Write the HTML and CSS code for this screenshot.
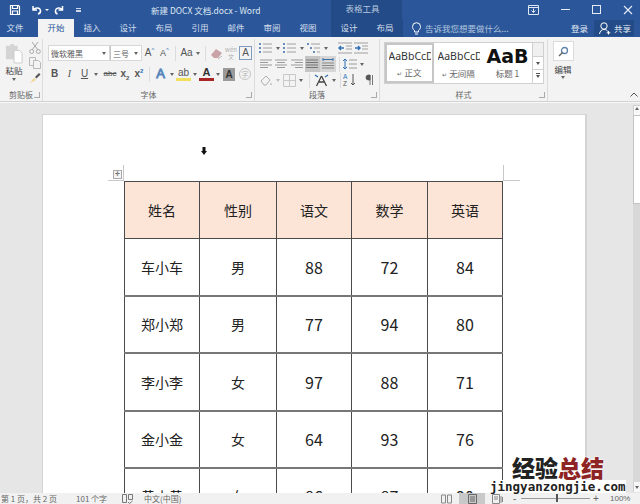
FILE: index.html
```html
<!DOCTYPE html>
<html lang="zh-CN">

<head>
    <meta charset="UTF-8">
    <title>新建 DOCX 文档.docx - Word</title>
    <link rel="stylesheet" href="styles.css">
</head>

<body>
    <div class="app">
        <!-- title bar -->
        <div class="titlebar">
            <div class="qat">
                <svg class="qat-save" width="12" height="12" viewBox="0 0 12 12"><path d="M1.5 1.5h8l1 1v8h-9z M3.5 1.5v3h5v-3 M3.5 10.5v-3.500h5v3.500" fill="none" stroke="#fff" stroke-width="1.200"/></svg>
                <svg class="qat-undo" width="13" height="12" viewBox="0 0 13 12"><path d="M3 2v4h4 M3.500 5.500c2-2.500 6.500-2 7 1 .3 2-1 3-2.500 3.500" fill="none" stroke="#fff" stroke-width="1.500"/></svg>
                <span class="qat-caret"></span>
                <svg class="qat-redo" width="12" height="12" viewBox="0 0 12 12"><path d="M9.500 2v4h-4 M9 5.500c-2-2.500-6-2-6.500 1-.3 2 .5 3 2 3.500" fill="none" stroke="#fff" stroke-width="1.500"/></svg>
                <span class="qat-more"></span>
            </div>
            <div class="doc-title">新建 DOCX 文档.docx - Word</div>
            <div class="context-title">表格工具</div>
            <div class="win-btns">
                <svg class="win-opt" width="11" height="10" viewBox="0 0 11 10"><path d="M.5.500h10v9h-10z M.5 2.500h10 M5.500 3.500v4 M3.500 5.500l2 2 2-2" fill="none" stroke="#dfe7f3"/></svg>
                <span class="win-min"></span>
                <span class="win-max"></span>
                <svg class="win-close" width="10" height="10" viewBox="0 0 10 10"><path d="M1 1l8 8 M9 1l-8 8" stroke="#e6ecf5" stroke-width="1.100"/></svg>
            </div>
        </div>

        <!-- tabs -->
        <div class="tabs">
            <span class="tab tab-file">文件</span>
            <span class="tab active">开始</span>
            <span class="tab">插入</span>
            <span class="tab">设计</span>
            <span class="tab">布局</span>
            <span class="tab">引用</span>
            <span class="tab">邮件</span>
            <span class="tab">审阅</span>
            <span class="tab">视图</span>
            <div class="context-tabs">
                <span class="tab">设计</span>
                <span class="tab">布局</span>
            </div>
            <div class="tell-me">
                <svg width="9" height="13" viewBox="0 0 9 13"><path d="M2.500 8.500C1 7.300.5 6 .5 4.700a4 4 0 0 1 8 0c0 1.300-.5 2.600-2 3.800v1.500h-4z M3 12h3" fill="none" stroke="#fff"/></svg>
                <span>告诉我您想要做什么...</span>
            </div>
            <span class="login">登录</span>
            <div class="share">
                <svg width="12" height="13" viewBox="0 0 12 13"><circle cx="5" cy="4" r="3.200" fill="none" stroke="#fff"/><path d="M.5 12c.5-3 2.200-4.500 4.500-4.500s3 .7 3.700 2 M9.500 9v3.500 M7.700 10.800h3.600" fill="none" stroke="#fff"/></svg>
                <span>共享</span>
            </div>
        </div>

        <!-- ribbon -->
        <div class="ribbon">
            <div class="group group-clip">
                <div class="clip-body">
                    <div class="paste">
                        <svg width="18" height="21" viewBox="0 0 20 23"><path d="M1 3h5V1h4v2h4v15H1z" fill="#d4d4d4"/><path d="M10 8h6l3 3v11h-9z" fill="#fff" stroke="#c8c8c8"/></svg>
                        <span class="paste-label">粘贴</span>
                        <span class="arrow"></span>
                    </div>
                    <div class="clip-tools">
                        <svg width="12" height="13" viewBox="0 0 12 13"><path d="M3 1l6 8 M9 1L3 9" stroke="#a8a8a8"/><circle cx="2.700" cy="10.500" r="2" fill="none" stroke="#a8a8a8"/><circle cx="9.300" cy="10.500" r="2" fill="none" stroke="#a8a8a8"/></svg>
                        <svg width="12" height="12" viewBox="0 0 12 12"><path d="M.5.500h6v8h-6z" fill="#f3f3f3" stroke="#b8b8b8"/><path d="M4.500 3.500h5l2 2v6h-7z" fill="#f3f3f3" stroke="#b8b8b8"/></svg>
                        <svg width="12" height="12" viewBox="0 0 12 12"><path d="M1 11l4-5 2 2z" fill="#f2d38c"/><path d="M6 5l4-4 1.500 1.500-4 4z" fill="#555"/></svg>
                    </div>
                </div>
                <div class="group-foot"><span>剪贴板</span><i class="launcher"></i></div>
            </div>

            <div class="group group-font">
                <div class="tool-row">
                    <div class="select select-font"><span>微软雅黑</span><span class="arrow"></span></div>
                    <div class="select select-size"><span>三号</span><span class="arrow"></span></div>
                    <span class="tb">A<sup>^</sup></span>
                    <span class="tb tb-small">A<sup>^</sup></span>
                    <span class="tb-sep"></span>
                    <span class="tb tb-aa">Aa</span><span class="arrow arrow-inline"></span>
                    <span class="tb-sep"></span>
                    <svg class="tb-svg" width="13" height="13" viewBox="0 0 13 13"><path d="M1 8l5-6 6 4-4 5H4z" fill="#c9a3a8"/><path d="M8 12l4-3" stroke="#bbb"/></svg>
                    <span class="tb tb-wen">wén<br>文</span>
                    <span class="tb tb-box">A</span>
                </div>
                <div class="tool-row tool-row-2">
                    <span class="tb tb-b">B</span>
                    <span class="tb tb-i">I</span>
                    <span class="tb tb-u">U</span><span class="arrow arrow-inline"></span>
                    <span class="tb tb-abc">abc</span>
                    <span class="tb tb-x">x<sub>2</sub></span>
                    <span class="tb tb-x">x<sup>2</sup></span>
                    <span class="tb-sep"></span>
                    <span class="tb tb-fx">A</span><span class="arrow arrow-inline"></span>
                    <span class="tb tb-hl">ab</span><span class="arrow arrow-inline"></span>
                    <span class="tb tb-color">A</span><span class="arrow arrow-inline"></span>
                    <span class="tb tb-shade">A</span>
                    <span class="tb tb-circle">字</span>
                </div>
                <div class="group-foot"><span>字体</span><i class="launcher"></i></div>
            </div>

            <div class="group group-para">
                <div class="para-row para-row-1">
                    <svg class="list-ic" width="14" height="12" viewBox="0 0 14 12"><path d="M0 2h2 M0 6h2 M0 10h2" stroke="#3a6ea5" stroke-width="1.500"/><path d="M4 2h9 M4 6h9 M4 10h9" stroke="#a0a0a0"/></svg><span class="arrow arrow-inline"></span>
                    <svg class="list-ic" width="14" height="12" viewBox="0 0 14 12"><path d="M1 1v2 M0 6h2 M0 10h2" stroke="#3a6ea5" stroke-width="1.500"/><path d="M4 2h9 M4 6h9 M4 10h9" stroke="#a0a0a0"/></svg><span class="arrow arrow-inline"></span>
                    <svg class="list-ic" width="14" height="12" viewBox="0 0 14 12"><path d="M0 2h2 M3 6h2 M6 10h2" stroke="#3a6ea5" stroke-width="1.500"/><path d="M4 2h9 M7 6h6 M10 10h3" stroke="#a0a0a0"/></svg><span class="arrow arrow-inline"></span>
                    <svg class="indent-ic" width="14" height="12" viewBox="0 0 14 12"><path d="M1 6h5 M3 4L1 6l2 2" fill="none" stroke="#2f6fb5" stroke-width="1.400"/><path d="M0 1h14 M8 4h6 M8 7h6 M0 11h14" stroke="#a0a0a0"/></svg>
                    <svg class="indent-ic2" width="14" height="12" viewBox="0 0 14 12"><path d="M1 6h5 M4 4l2 2-2 2" fill="none" stroke="#2f6fb5" stroke-width="1.400"/><path d="M0 1h14 M8 4h6 M8 7h6 M0 11h14" stroke="#a0a0a0"/></svg>
                </div>
                <div class="para-row para-row-2">
                    <span class="align"><svg width="12" height="10" viewBox="0 0 12 10"><path d="M0 1h12 M0 3.500h8 M0 6h12 M0 8.500h8" stroke="#9a9a9a"/></svg></span>
                    <span class="align"><svg width="12" height="10" viewBox="0 0 12 10"><path d="M0 1h12 M2 3.500h8 M0 6h12 M2 8.500h8" stroke="#9a9a9a"/></svg></span>
                    <span class="align"><svg width="12" height="10" viewBox="0 0 12 10"><path d="M0 1h12 M4 3.500h8 M0 6h12 M4 8.500h8" stroke="#9a9a9a"/></svg></span>
                    <span class="align on"><svg width="12" height="10" viewBox="0 0 12 10"><path d="M0 1h12 M0 3.500h12 M0 6h12 M0 8.500h12" stroke="#777"/></svg></span>
                    <span class="align on-light"><svg width="12" height="12" viewBox="0 0 12 12"><path d="M1 0v3 M11 0v3 M1 1.500h10" stroke="#3a6ea5"/><path d="M0 5h12 M0 7.500h12 M0 10h12" stroke="#8a8a8a"/></svg></span>
                    <span class="tb-sep"></span>
                    <svg class="spacing-ic" width="14" height="12" viewBox="0 0 14 12"><path d="M2 1v10 M0 3l2-2 2 2 M0 9l2 2 2-2" fill="none" stroke="#2f6fb5"/><path d="M6 2h8 M6 6h8 M6 10h8" stroke="#9a9a9a"/></svg><span class="arrow arrow-inline"></span>
                </div>
                <div class="para-row para-row-3">
                    <svg width="14" height="13" viewBox="0 0 14 13"><path d="M2 7l5-5 4 4-4 5H5z" fill="#f3f3f3" stroke="#b0b0b0"/><path d="M12 8l1 3h-2z" fill="#c0c0c0"/></svg><span class="arrow arrow-inline arrow-pale"></span>
                    <svg class="border-ic" width="13" height="13" viewBox="0 0 13 13"><path d="M.5.500h12v12H.5z M6.500.500v12 M.5 6.500h12" fill="none" stroke="#c8c8c8"/></svg><span class="arrow arrow-inline"></span>
                    <span class="tb-sep"></span>
                    <svg class="chinese-ic" width="15" height="13" viewBox="0 0 15 13"><path d="M1 1l3 2 M14 1l-3 2" stroke="#2f6fb5" stroke-width="1.300"/><path d="M7.500 2l-5 10 M7.500 2l5 10 M5 8h5" fill="none" stroke="#444" stroke-width="1.300"/></svg><span class="arrow arrow-inline"></span>
                    <span class="tb-sep tb-sep-tight"></span>
                    <svg class="sort-ic" width="13" height="14" viewBox="0 0 13 14"><text x="0" y="6" font-size="6.500" font-family="Liberation Sans" fill="#2f6fb5">A</text><text x="0" y="13" font-size="6.500" font-family="Liberation Sans" fill="#555">Z</text><path d="M10 1v11 M8 10l2 2 2-2" fill="none" stroke="#555"/></svg>
                    <span class="tb-sep tb-sep-clear"></span>
                    <svg class="pilcrow-ic" width="10" height="12" viewBox="0 0 10 12"><path d="M5 1H3.500a2.300 2.300 0 0 0 0 5H5z M5 1v10 M7.500 1v10" fill="#555" stroke="#555" stroke-width=".8"/></svg>
                </div>
                <div class="group-foot"><span>段落</span><i class="launcher"></i></div>
            </div>

            <div class="group group-styles">
                <div class="gallery">
                    <div class="style-item selected">
                        <span class="style-sample">AaBbCcD</span>
                        <span class="style-name"><i>↵</i>正文</span>
                    </div>
                    <div class="style-item">
                        <span class="style-sample">AaBbCcD</span>
                        <span class="style-name"><i>↵</i>无间隔</span>
                    </div>
                    <div class="style-item">
                        <span class="style-sample style-big">AaB</span>
                        <span class="style-name">标题 1</span>
                    </div>
                    <div class="gallery-scroll">
                        <span class="scroll-up"></span>
                        <span class="scroll-down"></span>
                        <span class="scroll-more"></span>
                    </div>
                </div>
                <div class="group-foot"><span>样式</span><i class="launcher"></i></div>
            </div>

            <div class="group group-edit">
                <div class="edit-btn">
                    <svg width="11" height="11" viewBox="0 0 11 11"><circle cx="6.500" cy="4.500" r="3" fill="none" stroke="#5d7fa8" stroke-width="1.300"/><path d="M4.500 6.500L1 10" stroke="#666" stroke-width="1.500"/></svg>
                </div>
                <span class="edit-label">编辑</span>
                <span class="arrow"></span>
            </div>
            <svg class="collapse" width="8" height="5" viewBox="0 0 8 5"><path d="M.5 4.500L4 1l3.500 3.500" fill="none" stroke="#555"/></svg>
        </div>

        <!-- document -->
        <div class="workspace">
            <div class="page">
                <svg class="col-cursor" width="6" height="8" viewBox="0 0 6 8"><path d="M1.500 0h3v4H6L3 8 0 4h1.500z" fill="#111"/></svg>
                <span class="crop crop-lv"></span>
                <span class="crop crop-lh"></span>
                <span class="crop crop-rv"></span>
                <span class="crop crop-rh"></span>
                <span class="move-handle">+</span>
                <table class="score-table">
                    <colgroup>
                        <col class="col-a">
                        <col class="col-b">
                        <col class="col-c">
                        <col class="col-d">
                        <col class="col-e">
                    </colgroup>
                    <tr class="head">
                        <td>姓名</td>
                        <td>性别</td>
                        <td>语文</td>
                        <td>数学</td>
                        <td>英语</td>
                    </tr>
                    <tr class="row">
                        <td>车小车</td>
                        <td>男</td>
                        <td class="num">88</td>
                        <td class="num">72</td>
                        <td class="num">84</td>
                    </tr>
                    <tr class="row">
                        <td>郑小郑</td>
                        <td>男</td>
                        <td class="num">77</td>
                        <td class="num">94</td>
                        <td class="num">80</td>
                    </tr>
                    <tr class="row row-tall">
                        <td>李小李</td>
                        <td>女</td>
                        <td class="num">97</td>
                        <td class="num">88</td>
                        <td class="num">71</td>
                    </tr>
                    <tr class="row">
                        <td>金小金</td>
                        <td>女</td>
                        <td class="num">64</td>
                        <td class="num">93</td>
                        <td class="num">76</td>
                    </tr>
                    <tr class="row">
                        <td>黄小黄</td>
                        <td>女</td>
                        <td class="num">86</td>
                        <td class="num">87</td>
                        <td class="num">90</td>
                    </tr>
                </table>
            </div>
            <div class="scrollbar">
                <span class="scroll-btn btn-up"></span>
                <span class="scroll-thumb"></span>
                <span class="scroll-track"></span>
                <span class="scroll-btn btn-down"></span>
            </div>
        </div>

        <!-- status bar -->
        <div class="statusbar">
            <span class="st-pages">第 1 页，共 2 页</span>
            <span class="st-words">101 个字</span>
            <svg class="st-proof" width="11" height="10" viewBox="0 0 11 10"><path d="M.5.500h4v8h-4z M6.500.500h4v5h-4z M6 8l1.500 1.500L10.500 7" fill="none" stroke="#777"/></svg>
            <span class="st-lang">中文(中国)</span>
            <div class="st-views">
                <span class="view-btn"><svg width="11" height="10" viewBox="0 0 11 10"><path d="M.5 1h4v8h-4z M6.500 1h4v8h-4z" fill="none" stroke="#888"/></svg></span>
                <span class="view-btn on"><svg width="9" height="10" viewBox="0 0 9 10"><path d="M.5.500h8v9h-8z M2 3h5 M2 5h5 M2 7h5" fill="none" stroke="#666"/></svg></span>
                <span class="view-btn"><svg width="11" height="10" viewBox="0 0 11 10"><path d="M.5.500h7v9h-7z M2 3h4 M2 5h4 M9 2v7 M10.500 3v5" fill="none" stroke="#888"/></svg></span>
            </div>
            <div class="zoom-slider">
                <span class="zoom-minus">-</span>
                <span class="zoom-track"><i class="zoom-thumb"></i></span>
                <span class="zoom-plus">+</span>
            </div>
            <span class="st-zoom">100%</span>
        </div>

        <!-- watermark over the corner -->
        <div class="watermark">
            <div class="wm-cn">经验<b>总结</b></div>
            <div class="wm-url">jingyanzongjie.com</div>
        </div>
    </div>
</body>

</html>
```

FILE: styles.css
```css
* {
    box-sizing: border-box;
}

html,
body {
    margin: 0;
    padding: 0;
}

body {
    font-family: "Noto Sans CJK SC", "Noto Sans", sans-serif;
    font-size: 8px;
    color: #444;
    overflow: hidden;
}

.app {
    position: relative;
    width: 640px;
    height: 504px;
    display: flex;
    flex-direction: column;
    overflow: hidden;
}

/* title bar */
.titlebar {
    flex: 0 0 19px;
    display: flex;
    align-items: center;
    background-color: #2b579a;
    color: #dfe7f3;
}

.qat {
    flex: 0 0 151px;
    display: flex;
    align-items: center;
    padding-left: 9px;
}

.qat-undo {
    margin-left: 9px;
}

.qat-caret {
    margin-left: 2px;
    border: 2px solid transparent;
    border-top-color: #fff;
    margin-top: 2px;
}

.qat-redo {
    margin-left: 4px;
}

.qat-more {
    margin-left: 11px;
    width: 5px;
    height: 4px;
    border-top: 1px solid #cdd9ea;
    border-bottom: 2px solid #cdd9ea;
}

.doc-title {
    flex: 0 0 180px;
    font-size: 8.500px;
    white-space: nowrap;
}

.context-title {
    flex: 0 0 71px;
    height: 19px;
    line-height: 17px;
    text-align: center;
    padding-right: 8px;
    font-size: 8.500px;
    background-color: #234b87;
    color: #b6c6de;
}

.win-btns {
    flex: 1;
    display: flex;
    align-items: center;
    padding-left: 126px;
}

.win-min {
    width: 9px;
    height: 1px;
    margin-left: 22px;
    background-color: #e6ecf5;
}

.win-max {
    width: 9px;
    height: 9px;
    margin-left: 22px;
    border: 1px solid #e6ecf5;
}

.win-close {
    margin-left: 22px;
}

/* tabs */
.tabs {
    flex: 0 0 18px;
    display: flex;
    align-items: center;
    background-color: #2b579a;
    color: #d3deee;
    font-size: 8.500px;
}

.tab {
    flex: 0 0 36px;
    height: 18px;
    line-height: 16px;
    text-align: center;
}

.tab-file {
    flex-basis: 30px;
    margin-right: 8px;
}

.tab.active {
    background-color: #f3f3f3;
    color: #2b579a;
}

.context-tabs {
    display: flex;
    flex: 0 0 71px;
    height: 18px;
    margin-left: 5px;
    background-color: #234b87;
}

.tell-me {
    flex: 0 0 168px;
    display: flex;
    align-items: center;
    padding-left: 9px;
    gap: 4px;
    color: #b3c5de;
}

.login {
    flex: 0 0 22px;
    color: #e4ebf5;
    text-align: left;
}

.share {
    display: flex;
    align-items: center;
    gap: 3px;
    flex: 0 0 40px;
    height: 16px;
    margin-left: 1px;
    padding-left: 5px;
    background-color: #234b87;
    color: #e4ebf5;
}

/* ribbon */
.ribbon {
    position: relative;
    flex: 0 0 65px;
    display: flex;
    background-color: #f3f3f3;
    border-bottom: 1px solid #d2d2d2;
}

.group {
    position: relative;
    height: 62px;
    margin-top: 2px;
    border-right: 1px solid #dcdcdc;
}

.group-foot {
    position: absolute;
    left: 0;
    right: 0;
    bottom: 0;
    height: 13px;
    line-height: 14px;
    text-align: center;
    color: #666;
    font-size: 8px;
}

.launcher {
    position: absolute;
    right: 2px;
    bottom: 3px;
    width: 6px;
    height: 6px;
    border-left: 1px solid #aaa;
    border-top: 1px solid #aaa;
    transform: rotate(180deg);
}

.arrow {
    display: inline-block;
    width: 0;
    height: 0;
    border: 2px solid transparent;
    border-top: 3px solid #666;
    border-bottom: 0;
}

.arrow-inline {
    margin: 0 3px;
}

.group-font .arrow-inline {
    margin: 0 2px;
}

.arrow-pale {
    border-top-color: #bbb;
}

.group-clip {
    flex: 0 0 43px;
}

.clip-body {
    display: flex;
}

.paste {
    width: 28px;
    display: flex;
    flex-direction: column;
    align-items: center;
    padding-top: 4px;
}

.paste-label {
    font-size: 8.500px;
    line-height: 12px;
    color: #444;
}

.paste .arrow {
    margin-top: 2px;
}

.clip-tools {
    display: flex;
    flex-direction: column;
    align-items: center;
    gap: 3px;
    width: 13px;
    padding-top: 2px;
}

.group-font {
    flex: 0 0 212px;
}

.tool-row {
    display: flex;
    align-items: center;
    height: 16px;
    margin-top: 6px;
    padding-left: 5px;
}

.tool-row-2 {
    margin-top: 5px;
    padding-left: 4px;
}

.select {
    display: flex;
    align-items: center;
    justify-content: space-between;
    height: 16px;
    padding: 0 3px 0 2px;
    background-color: #fff;
    border: 1px solid #d8d8d8;
    color: #555;
    font-size: 8px;
}

.select-font {
    flex: 0 0 62px;
}

.select-size {
    flex: 0 0 32px;
    border-left: 1px solid #c4c4c4;
}

.tb {
    display: inline-block;
    flex: none;
    width: 15px;
    text-align: center;
    font-family: "Liberation Sans", sans-serif;
    font-size: 10px;
    line-height: 14px;
    color: #555;
}

.tb sup {
    font-size: 6px;
    line-height: 0;
    color: #2f6fb5;
}

.tb sub {
    font-size: 6px;
    line-height: 0;
}

.tb-small {
    font-size: 9px;
}

.tb-sep {
    flex: none;
    width: 1px;
    height: 15px;
    margin: 0 3px;
    background-color: #dcdcdc;
}

.tb-sep-tight {
    margin: 0 1px;
}

.tb-sep-clear {
    background-color: transparent;
    margin: 0 4px;
}

.tb-svg {
    margin-left: 1px;
}

.tb-wen {
    margin-left: 1px;
    width: 14px;
    font-family: "Noto Sans CJK SC", sans-serif;
    font-size: 6px;
    line-height: 7px;
    color: #b0b0b0;
}

.tb-box {
    width: 13px;
    height: 14px;
    margin-left: 1px;
    border: 1px solid #7f9cc0;
    line-height: 12px;
}

.tb-b {
    font-weight: bold;
}

.tb-i {
    font-style: italic;
    font-family: "Liberation Serif", serif;
}

.tb-u {
    text-decoration: underline;
}

.tb-abc {
    font-size: 8px;
    text-decoration: line-through;
    width: 16px;
    margin-left: 2px;
}

.tb-x {
    width: 14px;
    font-weight: bold;
}

.tb-fx {
    font-size: 13px;
    color: #fff;
    -webkit-text-stroke: 1px #5b87bd;
}

.tb-hl {
    border-bottom: 3px solid #f2df5e;
    line-height: 11px;
    height: 14px;
}

.tb-color {
    font-weight: bold;
    font-size: 11px;
    line-height: 11px;
    height: 14px;
    color: #333;
    border-bottom: 3px solid #a92525;
}

.tb-shade {
    width: 12px;
    height: 13px;
    line-height: 13px;
    margin-left: 1px;
    background-color: #9a9a9a;
    color: #333;
    font-weight: bold;
}

.tb-circle {
    width: 12px;
    height: 12px;
    margin-left: 4px;
    border: 1px solid #c4c4c4;
    border-radius: 50%;
    font-family: "Noto Sans CJK SC", sans-serif;
    font-size: 7px;
    line-height: 10px;
    color: #b5b5b5;
}

.group-para {
    flex: 0 0 125px;
}

.para-row {
    display: flex;
    align-items: center;
    padding-left: 4px;
    height: 16px;
}

.para-row-1 {
    margin-top: 1px;
}

.para-row svg {
    flex: none;
}

.indent-ic {
    margin-left: 7px;
}

.indent-ic2 {
    margin-left: 2px;
}

.para-row-2 {
    padding-left: 3px;
}

.align {
    display: flex;
    flex: 0 0 15.500px;
    align-items: center;
    justify-content: center;
    height: 16px;
}

.align.on {
    background-color: #c6c6c6;
}

.align.on-light {
    background-color: #d6d6d6;
}

.sort-ic {
    margin-left: 1px;
}

.chinese-ic {
    margin-left: 1px;
}

.group-styles {
    flex: 0 0 168px;
    padding: 3px 0 0 4px;
}

.gallery {
    display: flex;
    width: 160px;
    height: 42px;
    background-color: #fff;
    border: 1px solid #d0d0d0;
}

.style-item {
    flex: 0 0 49px;
    overflow: hidden;
    display: flex;
    flex-direction: column;
    align-items: center;
    padding-top: 4px;
    background-color: #fff;
}

.style-item.selected {
    border: 2px solid #c6c6c6;
    padding-top: 2px;
}

.style-sample {
    height: 19px;
    line-height: 19px;
    font-family: "Noto Sans", sans-serif;
    font-size: 10.500px;
    color: #333;
    white-space: nowrap;
    width: 42px;
    overflow: hidden;
}

.style-big {
    width: auto;
    font-family: "DejaVu Sans", sans-serif;
    font-size: 19px;
    font-weight: bold;
    color: #111;
}

.style-name {
    font-size: 8.500px;
    line-height: 14px;
    color: #666;
}

.style-name i {
    font-style: normal;
    font-size: 6px;
    margin-right: 2px;
}

.gallery-scroll {
    flex: 1;
    display: flex;
    flex-direction: column;
    border-left: 1px solid #d0d0d0;
}

.gallery-scroll span {
    flex: 1;
    position: relative;
    border-bottom: 1px solid #d0d0d0;
}

.gallery-scroll span:last-child {
    border-bottom: 0;
}

.scroll-up {
    background-color: #f0f0f0;
}

.scroll-down::after,
.scroll-more::after {
    content: "";
    position: absolute;
    left: 3px;
    top: 5px;
    border: 2px solid transparent;
    border-top: 3px solid #555;
}

.scroll-more::before {
    content: "";
    position: absolute;
    left: 3px;
    top: 3px;
    width: 4px;
    height: 1px;
    background-color: #555;
}

.group-edit {
    flex: 0 0 30px;
    border-right: 0;
    display: flex;
    flex-direction: column;
    align-items: center;
    padding-top: 2px;
}

.edit-btn {
    display: flex;
    align-items: center;
    justify-content: center;
    width: 21px;
    height: 20px;
    background-color: #fff;
    border: 1px solid #dcdcdc;
}

.edit-label {
    margin-top: 2px;
    line-height: 12px;
    font-size: 8.500px;
}

.group-edit .arrow {
    margin-top: 1px;
}

.collapse {
    position: absolute;
    right: 2px;
    bottom: 4px;
}

/* document area */
.workspace {
    flex: 1;
    display: flex;
    min-height: 0;
    background-color: #e6e6e6;
    padding-left: 42px;
    overflow: hidden;
    border-top: 1px solid #f8f8f8;
}

.page {
    position: relative;
    flex: 0 0 545px;
    margin-top: 11px;
    padding: 66px 0 0 81px;
    background-color: #fff;
    border-left: 1px solid #d4d4d4;
    border-right: 2px solid #d4d4d4;
    border-top: 1px solid #d4d4d4;
}

.col-cursor {
    position: absolute;
    left: 158px;
    top: 32px;
}

.crop {
    position: absolute;
    background-color: #c8c8c8;
}

.crop-lv {
    left: 80px;
    top: 50px;
    width: 1px;
    height: 16px;
}

.crop-lh {
    left: 65px;
    top: 65px;
    width: 16px;
    height: 1px;
}

.crop-rv {
    left: 460px;
    top: 50px;
    width: 1px;
    height: 15px;
}

.crop-rh {
    left: 460px;
    top: 65px;
    width: 17px;
    height: 1px;
}

.move-handle {
    position: absolute;
    left: 70px;
    top: 55px;
    width: 9px;
    height: 9px;
    border: 1px solid #aaa;
    background-color: #f4f4f4;
    font-family: "Liberation Sans", sans-serif;
    font-size: 9px;
    font-weight: bold;
    line-height: 7px;
    text-align: center;
    color: #777;
}

.score-table {
    border-collapse: collapse;
    table-layout: fixed;
    width: 379px;
    font-size: 14px;
    color: #222;
}

.col-a {
    width: 75px;
}

.col-b {
    width: 77px;
}

.col-c {
    width: 75px;
}

.col-d {
    width: 76px;
}

.col-e {
    width: 75px;
}

.score-table td {
    border: 1px solid #4a4a4a;
    padding: 0;
    text-align: center;
    vertical-align: middle;
}

.row td {
    border-bottom: 2px solid #777;
}

.head {
    height: 57px;
}

.head td {
    background-color: #fce4d6;
}

.row {
    height: 57px;
}

.row-tall {
    height: 58px;
}

.num {
    font-size: 16px;
}

.scrollbar {
    display: flex;
    flex-direction: column;
    flex: 0 0 7px;
    margin: 2px 0 1px 46px;
}

.scroll-btn {
    position: relative;
    flex: 0 0 10px;
    background-color: #f8f8f8;
    border-left: 1px solid #cfcfcf;
}

.scroll-btn::after {
    content: "";
    position: absolute;
    left: 1px;
    top: 4px;
    border: 2px solid transparent;
}

.btn-up {
    border-top: 1px solid #cfcfcf;
}

.btn-up::after {
    top: 1px;
    border-bottom: 3px solid #666;
    border-top: 0;
}

.btn-down::after {
    border-top: 3px solid #666;
    border-bottom: 0;
}

.scroll-thumb {
    flex: 0 0 89px;
    background-color: #fff;
    border: 1px solid #c4c4c4;
    border-right: 0;
}

.scroll-track {
    flex: 1;
    background-color: #d8d8d8;
}

/* status bar */
.statusbar {
    flex: 0 0 11px;
    display: flex;
    align-items: center;
    background-color: #f1f1f1;
    font-size: 8px;
    color: #666;
    line-height: 11px;
    white-space: nowrap;
}

.st-pages {
    flex: 0 0 76px;
    padding-left: 1px;
}

.st-words {
    flex: 0 0 46px;
}

.st-proof {
    flex: none;
    margin-right: 11px;
}

.st-lang {
    flex: 0 0 290px;
}

.st-views {
    display: flex;
    flex: 0 0 76px;
    align-items: center;
}

.view-btn {
    display: flex;
    flex: 0 0 25px;
    align-items: center;
    justify-content: center;
    height: 11px;
}

.view-btn.on {
    flex-basis: 26px;
    background-color: #c8c8c8;
}

.zoom-slider {
    display: flex;
    flex: 0 0 90px;
    align-items: center;
    padding-left: 3px;
    font-family: "Liberation Sans", sans-serif;
}

.zoom-minus {
    flex: 0 0 8px;
    font-size: 10px;
}

.zoom-track {
    position: relative;
    flex: 0 0 69px;
    height: 1px;
    background-color: #999;
    margin-right: 3px;
}

.zoom-thumb {
    position: absolute;
    left: 35px;
    top: -4px;
    width: 2px;
    height: 8px;
    background-color: #555;
}

.zoom-plus {
    font-size: 10px;
}

.st-zoom {
    margin-left: 10px;
    font-family: "Liberation Sans", sans-serif;
}

/* watermark sits on top of everything in the corner */
.watermark {
    position: absolute;
    left: 490px;
    top: 455px;
    width: 136px;
}

.wm-cn {
    padding-left: 22px;
    font-size: 23px;
    line-height: 25px;
    font-weight: 900;
    color: #222;
    text-shadow: 0 0 2px #fff, 0 0 2px #fff;
    white-space: nowrap;
}

.wm-cn b {
    color: #8e2424;
    font-weight: 900;
}

.wm-url {
    height: 13px;
    background-color: #fff;
    font-family: "DejaVu Sans Mono", monospace;
    font-size: 12.500px;
    font-weight: bold;
    line-height: 13px;
    color: #222;
    white-space: nowrap;
}
```
